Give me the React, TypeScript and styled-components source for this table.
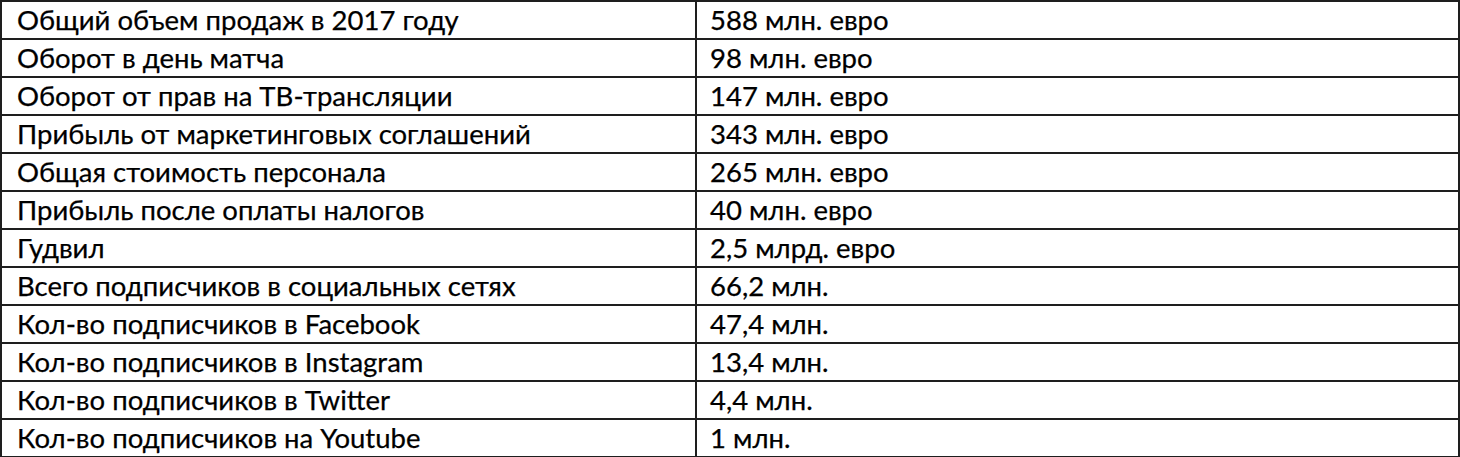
import styled, { createGlobalStyle } from "styled-components";

const GlobalStyle = createGlobalStyle`
    html, body {
        margin: 0;
        padding: 0;
        background: #ffffff;
    }
`;

const Table = styled.table`
    width: 1460px;
    border-collapse: collapse;
    font-family: "Lato", "Liberation Sans", sans-serif;
    font-size: 27.5px;
    color: #000000;
    table-layout: fixed;
    -webkit-text-stroke: 0.25px #000000;
`;

const Row = styled.tr`
    height: 38px;
`;

const Cell = styled.td<{ $first?: boolean }>`
    box-sizing: border-box;
    border: 2px solid #1e1e1e;
    padding: 0 0 0 ${(props) => (props.$first ? "15px" : "13px")};
    width: ${(props) => (props.$first ? "695px" : "auto")};
    white-space: nowrap;
    vertical-align: middle;
    line-height: 1;
`;

interface IStat {
    label: string;
    value: string;
}

const stats: IStat[] = [
    { label: "Общий объем продаж в 2017 году", value: "588 млн. евро" },
    { label: "Оборот в день матча", value: "98 млн. евро" },
    { label: "Оборот от прав на ТВ-трансляции", value: "147 млн. евро" },
    { label: "Прибыль от маркетинговых соглашений", value: "343 млн. евро" },
    { label: "Общая стоимость персонала", value: "265 млн. евро" },
    { label: "Прибыль после оплаты налогов", value: "40 млн. евро" },
    { label: "Гудвил", value: "2,5 млрд. евро" },
    { label: "Всего подписчиков в социальных сетях", value: "66,2 млн." },
    { label: "Кол-во подписчиков в Facebook", value: "47,4 млн." },
    { label: "Кол-во подписчиков в Instagram", value: "13,4 млн." },
    { label: "Кол-во подписчиков в Twitter", value: "4,4 млн." },
    { label: "Кол-во подписчиков на Youtube", value: "1 млн." },
];

function App() {
    return (
        <>
            <GlobalStyle />
            <Table>
                <tbody>
                    {stats.map((stat) => (
                        <Row key={stat.label}>
                            <Cell $first>{stat.label}</Cell>
                            <Cell>{stat.value}</Cell>
                        </Row>
                    ))}
                </tbody>
            </Table>
        </>
    );
}

export default App;
